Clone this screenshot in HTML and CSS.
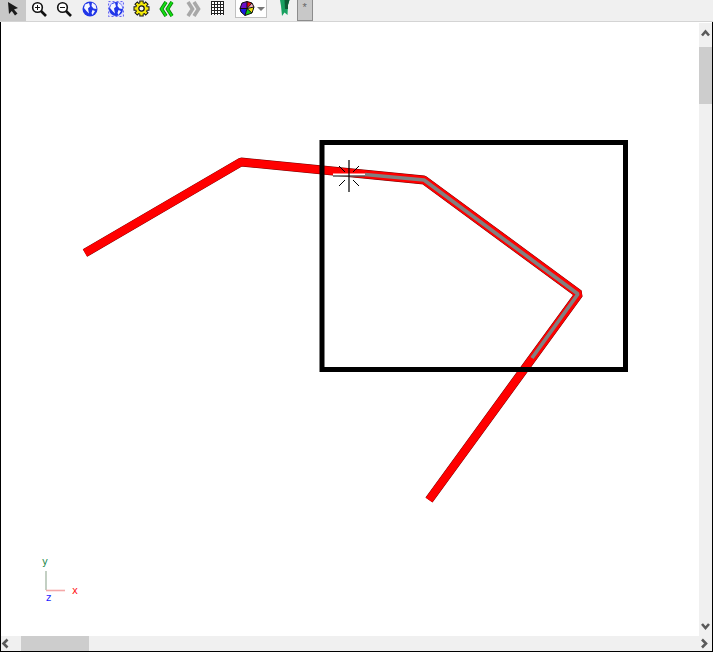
FILE: index.html
```html
<!DOCTYPE html>
<html lang="en">
<head>
    <meta charset="UTF-8">
    <title>Viewer</title>
    <link rel="stylesheet" href="styles.css">
</head>
<body>
    <div class="toolbar">
        <div class="tool selected">
            <svg width="16" height="16" viewBox="0 0 16 16"><path d="M3 1 L4 13 L6.8 10 L10 14.5 L12.5 12.5 L9 8.5 L13 7 Z" fill="#1a1a1a"/></svg>
        </div>
        <div class="tool">
            <svg width="16" height="16" viewBox="0 0 16 16"><circle cx="6.5" cy="6.5" r="4.8" fill="#fff" stroke="#111" stroke-width="1.6"/><path d="M4 6.5 H9 M6.5 4 V9" stroke="#111"/><path d="M10 10 L15 15" stroke="#111" stroke-width="2.6"/></svg>
        </div>
        <div class="tool">
            <svg width="16" height="16" viewBox="0 0 16 16"><circle cx="6.5" cy="6.5" r="4.8" fill="#fff" stroke="#111" stroke-width="1.6"/><path d="M4 6.5 H9" stroke="#111"/><path d="M10 10 L15 15" stroke="#111" stroke-width="2.6"/></svg>
        </div>
        <div class="tool">
            <svg width="16" height="16" viewBox="0 0 16 16"><circle cx="8" cy="8" r="7.5" fill="#2036e8"/><path d="M3 3.5 L7 2 L8 5.5 L6 7.5 L7 12.5 L4.5 10 L2 7 Z M10 1.5 L13.5 4 L14.5 8 L11.5 7.5 L9.5 5 Z M10.5 9 L13 10 L10.5 14 L9.5 12 Z" fill="#f4f6ff"/></svg>
        </div>
        <div class="tool">
            <svg width="16" height="16" viewBox="0 0 16 16"><rect x=".5" y=".5" width="15" height="15" fill="#dcdcff" stroke="#6a6af0" stroke-dasharray="2 2"/><circle cx="8" cy="8" r="7" fill="#2036e8"/><path d="M3 3.5 L7 2 L8 5.5 L6 7.5 L7 12.5 L4.5 10 L2 7 Z M10 1.5 L13.5 4 L14.5 8 L11.5 7.5 L9.5 5 Z M10.5 9 L13 10 L10.5 14 L9.5 12 Z" fill="#f4f6ff"/></svg>
        </div>
        <div class="tool">
            <svg width="17" height="17" viewBox="0 0 17 17">
                <path d="M8.5 .5 V16.5 M.5 8.5 H16.5 M2.8 2.8 L14.2 14.2 M14.2 2.8 L2.8 14.2" stroke="#111" stroke-width="4.4"/>
                <path d="M8.5 1.5 V15.5 M1.5 8.5 H15.5 M3.5 3.5 L13.5 13.5 M13.5 3.5 L3.5 13.5" stroke="#f5ea0a" stroke-width="2.4"/>
                <circle cx="8.5" cy="8.5" r="5.4" fill="#f5ea0a"/>
                <circle cx="8.5" cy="8.5" r="2.7" fill="#f4f4f4" stroke="#111" stroke-width="1.2"/>
            </svg>
        </div>
        <div class="tool">
            <svg width="16" height="16" viewBox="0 0 16 16"><path d="M7 1 L2.5 8 L7 15 M13 1 L8.5 8 L13 15" fill="none" stroke="#0a7a0a" stroke-width="3.6"/><path d="M7 1 L2.5 8 L7 15 M13 1 L8.5 8 L13 15" fill="none" stroke="#12e012" stroke-width="2"/></svg>
        </div>
        <div class="tool">
            <svg width="16" height="16" viewBox="0 0 16 16"><path d="M3 1 L7.5 8 L3 15 M9 1 L13.5 8 L9 15" fill="none" stroke="#a8a8a8" stroke-width="3.6"/></svg>
        </div>
        <div class="tool tool-grid">
            <svg width="13" height="14" viewBox="0 0 13 14"><rect width="13" height="14" fill="#fff"/><path d="M.5 0 V14 M3.5 0 V14 M6.5 0 V14 M9.5 0 V14 M12.5 0 V14 M0 .5 H13 M0 3.5 H13 M0 6.5 H13 M0 9.5 H13 M0 12.5 H13" stroke="#222"/></svg>
        </div>
        <div class="colour-select">
            <svg width="16" height="15" viewBox="0 0 16 15">
                <path d="M8 7.5 L1 7.5 L3 2 L8 .5 Z" fill="#6a10c8"/>
                <path d="M8 7.5 L8 .5 L13 2 Z" fill="#e81010"/>
                <path d="M8 7.5 L13 2 L15 6 Z" fill="#f4b0c0"/>
                <path d="M8 7.5 L15 6 L13 12 Z" fill="#f0e010"/>
                <path d="M8 7.5 L13 12 L6 14.5 Z" fill="#12c812"/>
                <path d="M8 7.5 L6 14.5 L2 11 L1 7.5 Z" fill="#1a1ae6"/>
                <path d="M1 7.5 L3 2 L8 .5 L13 2 L15 6 L13 12 L6 14.5 L2 11 Z M8 7.5 L1 7.5 M8 7.5 L8 .5 M8 7.5 L13 2 M8 7.5 L15 6 M8 7.5 L13 12 M8 7.5 L6 14.5" fill="none" stroke="#111"/>
            </svg>
            <span class="caret"></span>
        </div>
        <div class="flag">
            <svg width="11" height="16" viewBox="0 0 11 16"><path d="M1 0 H10.5 L9 5 L8.5 15 L5.5 12.5 L3 16 L2 6 Z" fill="#18a060"/><path d="M5.5 0 H10.5 L9 5 V9 H6 Z" fill="#0c5c34"/></svg>
        </div>
        <div class="small-button">*</div>
    </div>

    <div class="viewer">
        <div class="canvas">
            <!-- drawing coords are page coords, viewBox starts at the canvas origin (1,22) -->
            <svg class="drawing" width="698" height="614" viewBox="1 22 698 614">
                <polyline points="85,253 241,162 424,180 579,294 429,500" class="line-edge"/>
                <polyline points="85,253 241,162 424,180 579,294 429,500" class="line-red"/>
                <polyline points="365,174.5 424,180 578,294 532,358" class="line-grey"/>
                <rect x="322" y="142.5" width="303.5" height="227" class="box"/>

                <path d="M333 175 H365" stroke="#fff" stroke-width="3"/>
                <path d="M349 160 V192 M333 176 H365" stroke="#000" stroke-width="1.2"/>
                <path d="M339 166 L345 172 M359 166 L353 172 M339 186 L345 180 M359 186 L353 180" stroke="#000"/>

                <path d="M46 571 V590" stroke="#b4c4b4" stroke-width="1.6"/>
                <path d="M46 590.5 H65" stroke="#f4a8a8" stroke-width="1.6"/>
                <text x="42" y="565" class="axis axis-y">y</text>
                <text x="72" y="594" class="axis axis-x">x</text>
                <text x="46" y="601" class="axis axis-z">z</text>
            </svg>
        </div>
        <div class="scrollbar vertical">
            <svg class="end-top" width="13" height="20" viewBox="0 0 13 20"><path d="M3 12.5 L6.5 8.5 L10 12.5" class="arrow"/></svg>
            <div class="track track-v"><div class="thumb thumb-v"></div></div>
            <svg class="end-bottom" width="13" height="18" viewBox="0 0 13 18"><path d="M3 6 L6.5 10 L10 6" class="arrow"/></svg>
        </div>
        <div class="scrollbar horizontal">
            <svg width="14" height="15" viewBox="0 0 14 15"><path d="M6.5 3.5 L2.5 7.5 L6.5 11.5" class="arrow"/></svg>
            <div class="track track-h"><div class="thumb thumb-h"></div></div>
            <svg width="13" height="15" viewBox="0 0 13 15"><path d="M3 3.5 L7 7.5 L3 11.5" class="arrow"/></svg>
        </div>
    </div>
</body>
</html>
```

FILE: styles.css
```css
* {
    margin: 0;
    padding: 0;
    box-sizing: border-box;
}

body {
    width: 713px;
    height: 652px;
    overflow: hidden;
    background: white;
    font-family: "Liberation Sans", Arial, sans-serif;
    display: flex;
    flex-direction: column;
}

.toolbar {
    height: 22px;
    flex: none;
    display: flex;
    align-items: flex-start;
    background: #f0f0f0;
    border-bottom: 1px solid #d4d4d4;
    overflow: hidden;
}

.tool {
    width: 25.75px;
    height: 21px;
    padding-bottom: 4px;
    flex: none;
    display: flex;
    align-items: center;
    justify-content: center;
}

.tool svg {
    display: block;
}

.tool.selected {
    background: #c8c8c8;
}

.tool-grid {
    padding-right: 2px;
    padding-bottom: 6px;
}

.colour-select {
    width: 32px;
    height: 18px;
    margin-left: 3px;
    flex: none;
    display: flex;
    align-items: center;
    gap: 2px;
    padding-left: 3px;
    background: white;
    border: 1px solid #c0c0c0;
    border-top: none;
}

.caret {
    width: 0;
    height: 0;
    border-left: 4px solid transparent;
    border-right: 4px solid transparent;
    border-top: 4px solid #777;
}

.flag {
    width: 11px;
    height: 16px;
    margin-left: 12px;
    flex: none;
}

.small-button {
    width: 16px;
    height: 21px;
    margin-left: 7px;
    flex: none;
    background: #c8c8c8;
    border: 1px solid #8c8c8c;
    border-top: none;
    color: #666;
    font-size: 11px;
    line-height: 14px;
    text-align: center;
}

.viewer {
    flex: 1;
    min-height: 0;
    display: grid;
    grid-template-columns: 698px 13px;
    grid-template-rows: 614px 15px;
    background: white;
    border-left: 1px solid #000;
    border-right: 1px solid #000;
    border-bottom: 1px solid #000;
}

.canvas {
    overflow: hidden;
}

.drawing {
    display: block;
}

.line-edge,
.line-red,
.line-grey {
    fill: none;
    stroke-linejoin: bevel;
}

.line-edge {
    stroke: #700000;
    stroke-width: 8.8;
}

.line-red {
    stroke: #ff0000;
    stroke-width: 8;
}

.line-grey {
    stroke: #808080;
    stroke-width: 3.6;
}

.box {
    fill: none;
    stroke: #000;
    stroke-width: 5;
}

.axis {
    font-family: "DejaVu Sans", sans-serif;
    font-size: 10px;
}

.axis-x {
    fill: #ff2020;
}

.axis-y {
    fill: #1a8a4a;
}

.axis-z {
    fill: #1a1aff;
}

.scrollbar {
    display: flex;
    background: #f0f0f0;
}

.scrollbar svg {
    display: block;
    flex: none;
}

.vertical {
    flex-direction: column;
    margin-top: 1px;
}

.horizontal {
    grid-column: 1 / span 2;
}

.track {
    flex: 1;
}

.thumb {
    background: #cdcdcd;
}

.thumb-v {
    height: 57px;
    margin-top: 4px;
}

.thumb-h {
    width: 68px;
    height: 15px;
    margin-left: 6px;
}

.arrow {
    fill: none;
    stroke: #5a5a5a;
    stroke-width: 2.6;
}
```
